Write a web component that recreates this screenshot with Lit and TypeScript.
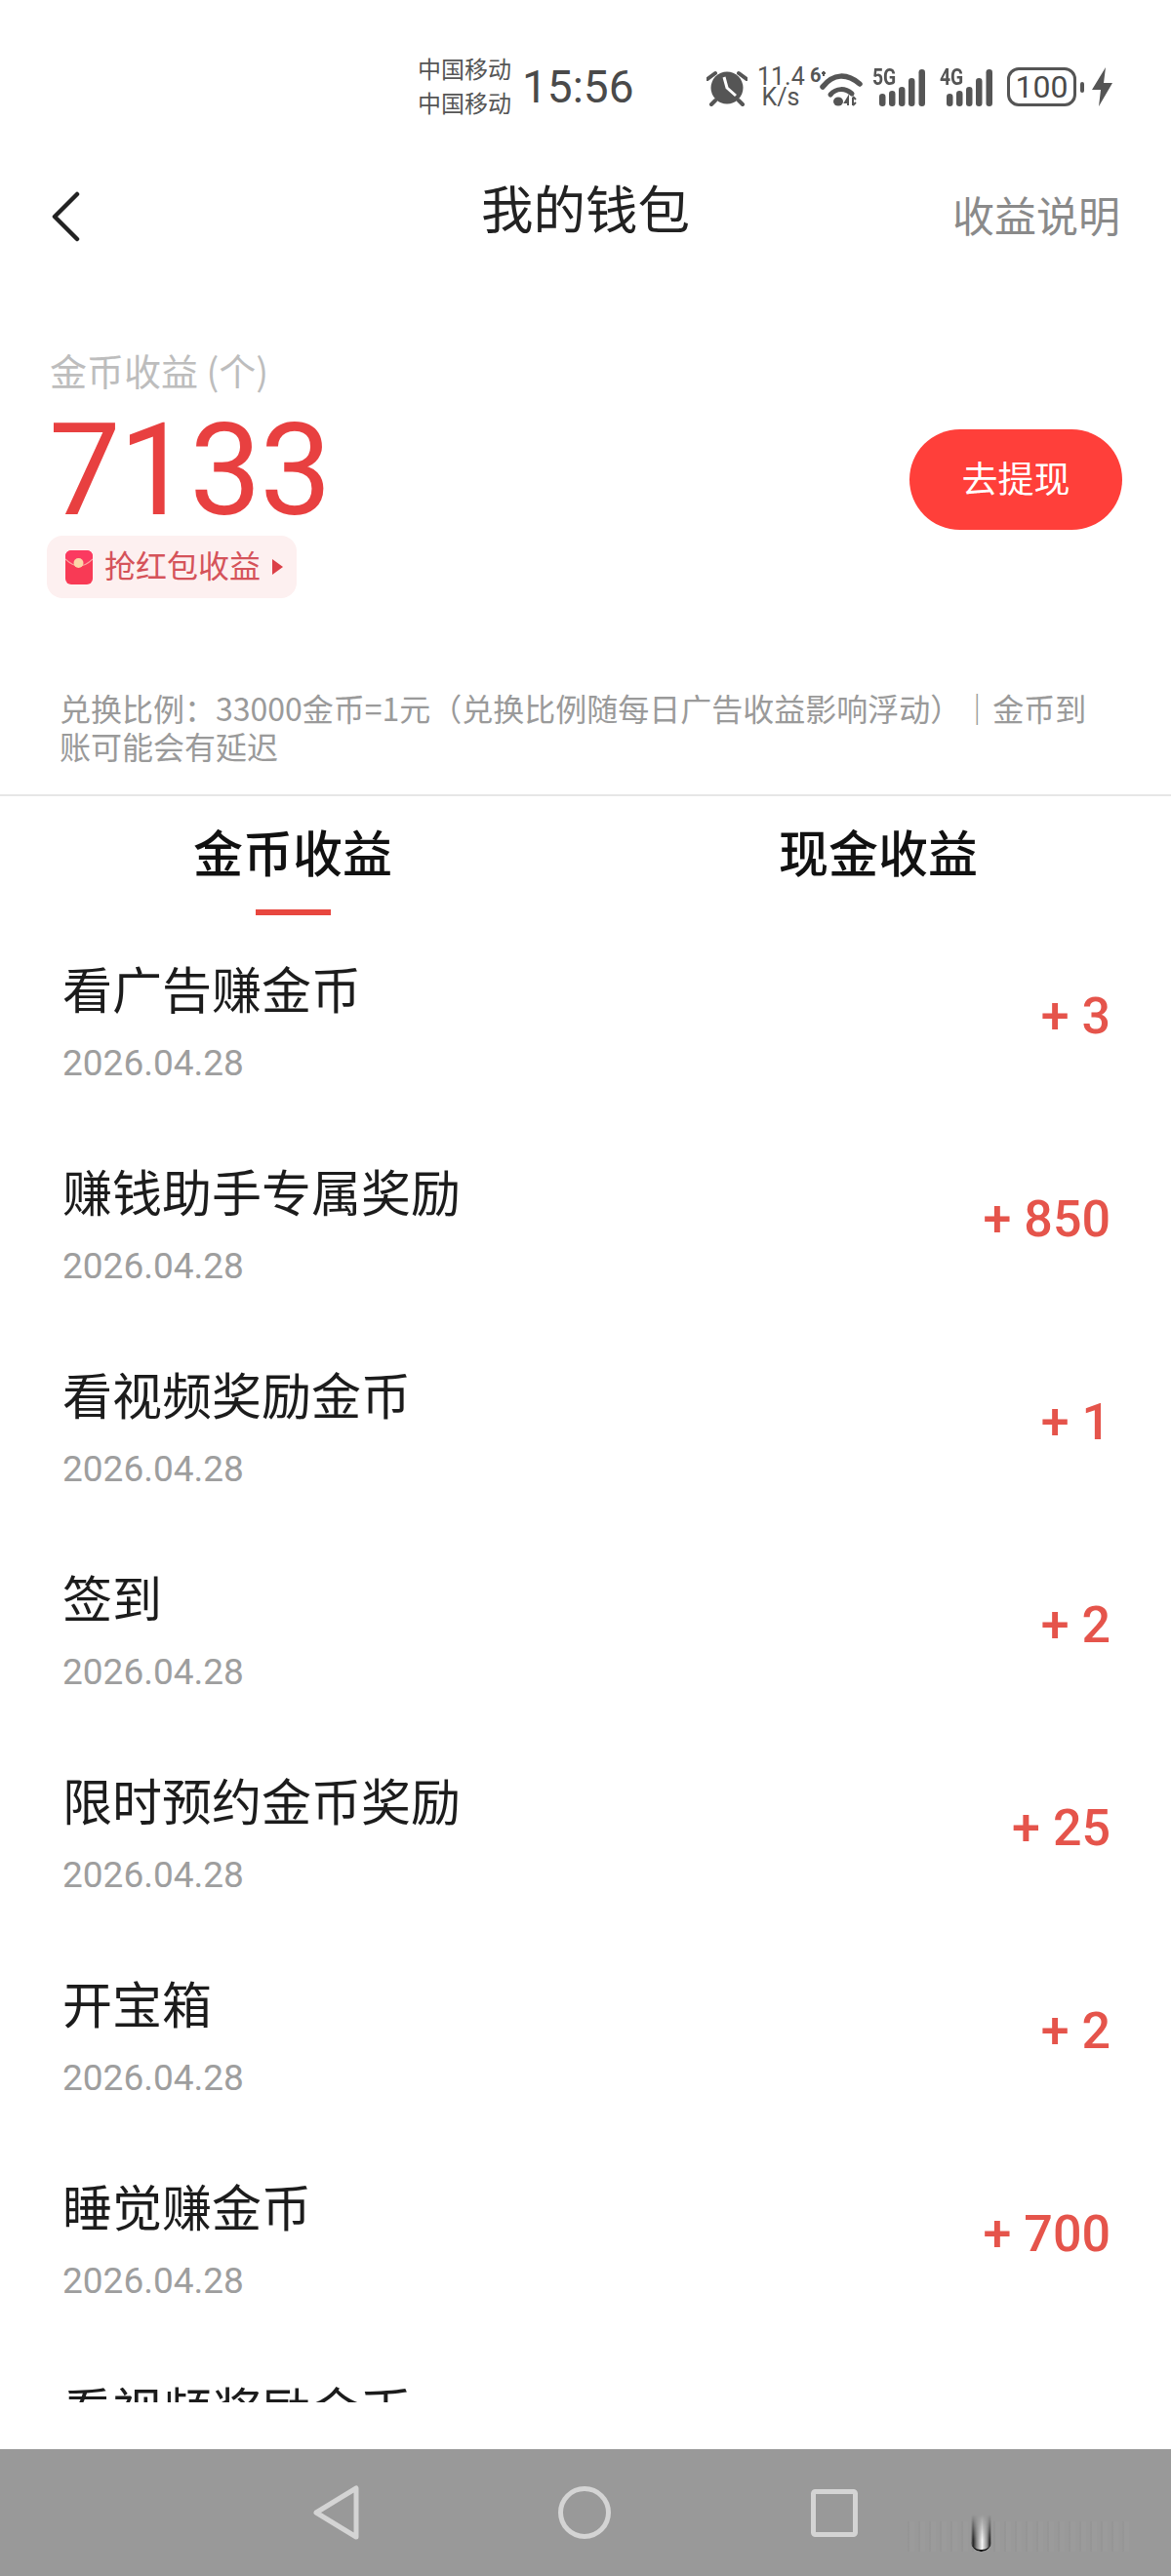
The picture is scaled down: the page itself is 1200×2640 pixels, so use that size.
import { LitElement, html, css } from "lit";
import { customElement } from "lit/decorators.js";

const rows: [string, string][] = [
  ["看广告赚金币", "+ 3"],
  ["赚钱助手专属奖励", "+ 850"],
  ["看视频奖励金币", "+ 1"],
  ["签到", "+ 2"],
  ["限时预约金币奖励", "+ 25"],
  ["开宝箱", "+ 2"],
  ["睡觉赚金币", "+ 700"],
  ["看视频奖励金币", "+ 1"],
];

const bars = html`<svg class="bars" width="48" height="38" viewBox="0 0 48 38" fill="#555">
  <rect x="0" y="25" width="6.5" height="13" rx="3.2"/><rect x="10" y="22" width="6.5" height="16" rx="3.2"/>
  <rect x="20" y="18" width="6.5" height="20" rx="3.2"/><rect x="30" y="9" width="6.5" height="29" rx="3.2"/>
  <rect x="40.5" y="0" width="6.5" height="38" rx="3.2"/>
</svg>`;

@customElement("app-root")
export class AppRoot extends LitElement {
  static styles = css`
    :host { display: flex; flex-direction: column; width: 1200px; height: 2640px; background: #fff; overflow: hidden;
      font-family: "Noto Sans CJK SC", "Noto Sans", sans-serif; color: #1c1c1c; }
    .status { height: 178px; display: flex; align-items: center; padding-left: 428px; box-sizing: border-box; color: #555; }
    .carrier { width: 100px; font-size: 24px; line-height: 35px; margin-top: -4px; }
    .time { width: 196px; margin-left: 7px; font: 46px/1 Roboto, sans-serif; color: #4a4a4a; }
    .sicons { display: flex; align-items: center; margin-left: -7px; height: 44px; }
    .speed { width: 48px; margin-left: 10px; font: 25px/21px Roboto, sans-serif; text-align: center; color: #555; }
    .speed span { display: block; }
    .sup { width: 14px; margin-left: 6px; align-self: flex-start; font: 700 20px/20px Roboto, sans-serif; color: #555; }
    .wifi { margin-left: -8px; display: flex; }
    .sig { display: flex; align-items: flex-end; position: relative; height: 39px; }
    .gen { position: absolute; left: 0; top: 0; font: 700 23px/20px Roboto, sans-serif; transform: scaleX(.84); transform-origin: left top; color: #555; background: #fff; }
    .s5 { margin-left: 10px; width: 55px; justify-content: flex-end; }
    .s4 { margin-left: 14px; width: 55px; justify-content: flex-end; }
    .bat { width: 71px; height: 40px; margin-left: 14px; box-sizing: border-box; border: 3px solid #555; border-radius: 12px; font: 32px/34px Roboto, sans-serif; text-align: center; color: #4a4a4a; }
    .nub { margin-left: 4px; }
    .bolt { margin-left: 7px; }
    .nav { height: 88px; display: grid; grid-template-columns: 1fr auto 1fr; align-items: center; padding: 0 52px; box-sizing: border-box; }
    .nav .back { display: flex; }
    .nav h1 { margin: -20px 0 0; font-size: 53.5px; font-weight: 400; line-height: 1; color: #222; }
    .nav .explain { justify-self: end; font-size: 43px; color: #8a8a8a; line-height: 1; margin-top: -6px; }
    .summary { display: flex; justify-content: space-between; align-items: flex-start; padding: 91px 50px 0 48px; }
    .sum-left { display: flex; flex-direction: column; align-items: flex-start; }
    .coin-label { font-size: 38px; line-height: 50px; color: #bdbdbd; padding-left: 3px; margin-top: -3px; }
    .amount { font: 400 131px/112px Roboto, sans-serif; color: #e84040; padding-left: 2px; margin-top: 22px; letter-spacing: -1.5px; }
    .pill { display: flex; align-items: center; height: 64px; width: 256px; box-sizing: border-box; padding-left: 19px; background: #fdf0f0; border-radius: 16px; margin-top: 11px; color: #d5535a; font-size: 32px; }
    .pill span { padding-bottom: 6px; }
    .packet { margin-right: 12px; }
    .caret { margin-left: 12px; }
    .btn { width: 218px; height: 103px; padding-bottom: 6px; box-sizing: border-box; margin-top: 83px; border-radius: 52px; background: #ff3f3a; color: #fff; font-size: 37px; display: flex; align-items: center; justify-content: center; }
    .note { padding: 93px 84px 0 61px; font-size: 32px; line-height: 38.5px; color: #9a9a9a; }
    .divider { height: 2px; background: #e6e6e6; margin-top: 31px; }
    .tabs { display: grid; grid-template-columns: 1fr 1fr; height: 128px; text-align: center; font-size: 51px; color: #111; }
    .tab { position: relative; line-height: 1; padding-top: 31px; font-weight: 500; }
    .tab.on::after { content: ""; position: absolute; left: 262px; top: 116px; width: 77px; height: 6px; background: #e8473f; }
    .list { height: 1518px; overflow: hidden; margin-bottom: 48px; }
    .row { display: flex; justify-content: space-between; align-items: center; height: 208px; padding: 0 62px 0 64px; box-sizing: border-box; }
    .row .t { font-size: 51px; line-height: 60px; margin-top: -3px; }
    .row .d { font: 37px/44px Roboto, sans-serif; color: #9e9e9e; margin-top: 26px; }
    .row .v { font: 500 52px/1 Roboto, sans-serif; color: #e5544b; margin-top: -12px; }
    .sys { height: 130px; background: #999; position: relative; }
    .sys svg { position: absolute; }
    .glitch { position: absolute; left: 995px; top: 67px; width: 21px; height: 38px; border-radius: 0 0 10px 10px; border-bottom: 2px solid #111; box-sizing: border-box;
      background: linear-gradient(90deg, #999 0, #222 10%, #888 28%, #f4f4f4 55%, #888 80%, #222 92%, #999 100%);
      -webkit-mask-image: linear-gradient(180deg, transparent, #000 70%); mask-image: linear-gradient(180deg, transparent, #000 70%); }
    .noise { position: absolute; left: 930px; top: 74px; width: 230px; height: 31px;
      background: repeating-linear-gradient(90deg, rgba(0,0,0,.025) 0 2px, rgba(255,255,255,.025) 2px 7px, rgba(0,0,0,0) 7px 11px); }
  `;
  render() {
    return html`
      <div class="status">
        <div class="carrier">中国移动<br />中国移动</div>
        <div class="time">15:56</div>
        <div class="sicons">
          <svg width="42" height="40" viewBox="0 0 42 40">
            <path d="M1 12 9 6M41 12 33 6" stroke="#555" stroke-width="4" stroke-linecap="round" fill="none"/>
            <path d="M9 34 5 38M33 34l4 4" stroke="#555" stroke-width="4" stroke-linecap="round" fill="none"/>
            <circle cx="21" cy="21" r="16.5" fill="#555"/>
            <path d="M18 10l3 11 9 8" stroke="#fff" stroke-width="3" fill="none"/>
          </svg>
          <div class="speed"><span>11.4</span><span>K/s</span></div>
          <div class="sup">6</div>
          <svg class="wifi" width="48" height="40" viewBox="6 0 48 40">
            <path d="M12 6h4M14 4v5" stroke="#555" stroke-width="2" fill="none"/>
            <path d="M13 20C24 6 38 6 51 17" stroke="#555" stroke-width="5.5" fill="none" stroke-linecap="round"/>
            <path d="M21 28c6-7 15-7 22-1" stroke="#555" stroke-width="5" fill="none" stroke-linecap="round"/>
            <ellipse cx="29" cy="35" rx="5" ry="4.5" fill="#555"/>
            <path d="M39 39V31l-3 5h3M44 31v8M47 33l-3-3M44 39l3-3" stroke="#555" stroke-width="2" fill="none"/>
          </svg>
          <div class="sig s5"><span class="gen">5G</span>${bars}</div>
          <div class="sig s4"><span class="gen">4G</span>${bars}</div>
          <div class="bat">100</div>
          <svg class="nub" width="5" height="11" viewBox="0 0 5 11"><rect width="4" height="11" rx="2" fill="#555"/></svg>
          <svg class="bolt" width="22" height="40" viewBox="0 0 22 40" fill="#555"><path d="M14 0 0 23h9L7 40 21 16h-9z"/></svg>
        </div>
      </div>
      <div class="nav">
        <div class="back"><svg width="32" height="52" viewBox="0 0 32 52" fill="none" stroke="#222" stroke-width="4.5" stroke-linecap="round" stroke-linejoin="round"><path d="M27 3 4 26l23 23"/></svg></div>
        <h1>我的钱包</h1>
        <div class="explain">收益说明</div>
      </div>
      <div class="summary">
        <div class="sum-left">
          <div class="coin-label">金币收益 (个)</div>
          <div class="amount">7133</div>
          <div class="pill">
            <svg class="packet" width="28" height="35" viewBox="0 0 28 35"><rect width="28" height="35" rx="6" fill="#f83a55"/><path d="M0 8c5 5 9 7 14 7s9-2 14-7v-2a6 6 0 0 0-6-6H6a6 6 0 0 0-6 6z" fill="#fb3a60"/><path d="M0 9c5 5 9 7 14 7s9-2 14-7" fill="none" stroke="#fda0a0" stroke-width="1.2"/><circle cx="13.5" cy="13" r="5" fill="#fbd6a8"/></svg>
            <span>抢红包收益</span>
            <svg class="caret" width="12" height="18" viewBox="0 0 12 18"><path d="M0 1l11 8-11 8z" fill="#dc4048"/></svg>
          </div>
        </div>
        <div class="btn">去提现</div>
      </div>
      <div class="note">兑换比例：33000金币=1元（兑换比例随每日广告收益影响浮动）｜金币到账可能会有延迟</div>
      <div class="divider"></div>
      <div class="tabs"><div class="tab on">金币收益</div><div class="tab">现金收益</div></div>
      <div class="list">
        ${rows.map(([t, v]) => html`<div class="row"><div><div class="t">${t}</div><div class="d">2026.04.28</div></div><div class="v">${v}</div></div>`)}
      </div>
      <div class="sys">
        <svg style="left:320px;top:36px" width="50" height="58" viewBox="0 0 50 58" fill="none" stroke="#d4d4d4" stroke-width="5" stroke-linejoin="round"><path d="M45 4v50L4 29z"/></svg>
        <svg style="left:572px;top:38px" width="54" height="54" viewBox="0 0 54 54" fill="none" stroke="#d4d4d4" stroke-width="5"><circle cx="27" cy="27" r="24.5"/></svg>
        <svg style="left:831px;top:41px" width="48" height="49" viewBox="0 0 48 49" fill="none" stroke="#d4d4d4" stroke-width="5"><rect x="2.5" y="2.5" width="43" height="44" rx="2"/></svg>
        <div class="noise"></div>
        <div class="glitch"></div>
      </div>
    `;
  }
}
